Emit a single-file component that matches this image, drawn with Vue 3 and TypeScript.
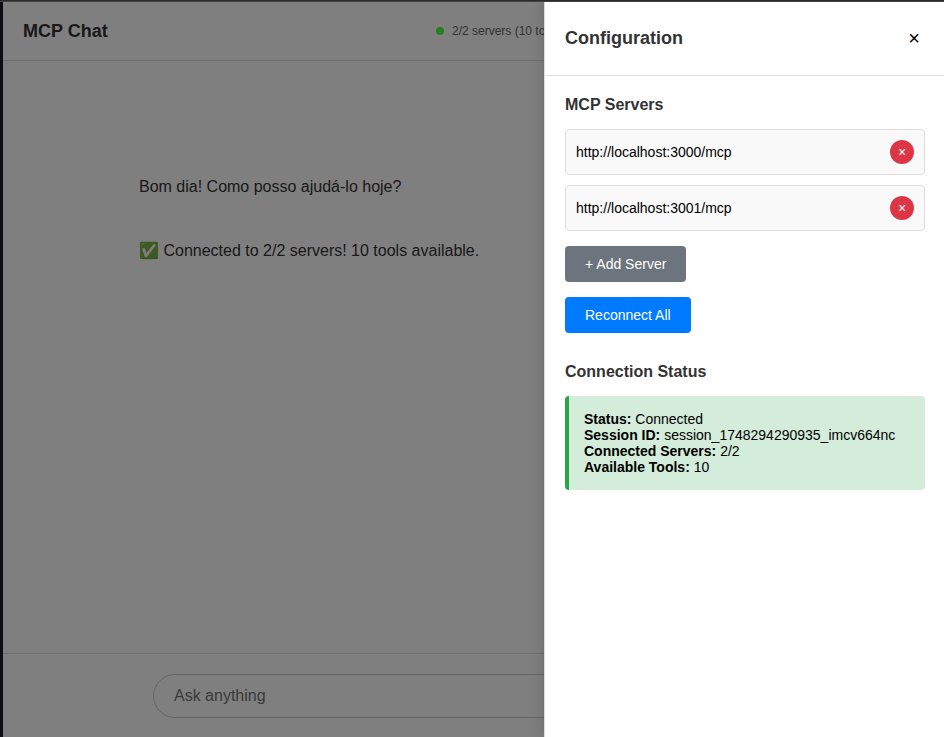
<script setup lang="ts">
import { ref } from 'vue'

interface Message {
  id: number
  text: string
}

interface StatusRow {
  label: string
  value: string
}

const messages: Message[] = [
  { id: 1, text: 'Bom dia! Como posso ajudá-lo hoje?' },
  { id: 2, text: '✅ Connected to 2/2 servers! 10 tools available.' },
]

const servers = ref<string[]>(['http://localhost:3000/mcp', 'http://localhost:3001/mcp'])

const statusRows: StatusRow[] = [
  { label: 'Status:', value: 'Connected' },
  { label: 'Session ID:', value: 'session_1748294290935_imcv664nc' },
  { label: 'Connected Servers:', value: '2/2' },
  { label: 'Available Tools:', value: '10' },
]

const draft = ref('')

function removeServer(index: number): void {
  servers.value.splice(index, 1)
}

function addServer(): void {
  servers.value.push('')
}
</script>

<template>
  <div class="window">
    <div class="app">
      <header class="app-header">
        <h1 class="app-title">MCP Chat</h1>
        <div class="server-status">
          <span class="status-dot"></span>
          <span>2/2 servers (10 tools)</span>
        </div>
      </header>
      <main class="messages">
        <p v-for="message in messages" :key="message.id" class="message">{{ message.text }}</p>
      </main>
      <footer class="composer">
        <input v-model="draft" class="composer-input" type="text" placeholder="Ask anything" />
      </footer>
    </div>
    <div class="overlay">
      <aside class="panel">
        <header class="panel-header">
          <h2 class="panel-title">Configuration</h2>
          <button class="close-button" type="button">×</button>
        </header>
        <div class="panel-body">
          <section class="section">
            <h3 class="section-title">MCP Servers</h3>
            <div v-for="(server, index) in servers" :key="index" class="server-item">
              <span class="server-url">{{ server }}</span>
              <button class="remove-button" type="button" @click="removeServer(index)">×</button>
            </div>
            <div class="actions">
              <button class="button secondary" type="button" @click="addServer">+ Add Server</button>
              <button class="button primary" type="button">Reconnect All</button>
            </div>
          </section>
          <section class="section">
            <h3 class="section-title">Connection Status</h3>
            <div class="status-card">
              <div v-for="row in statusRows" :key="row.label">
                <strong>{{ row.label }}</strong> {{ row.value }}
              </div>
            </div>
          </section>
        </div>
      </aside>
    </div>
  </div>
</template>

<style>
body {
  overflow: hidden;
}
</style>

<style scoped>
* {
  box-sizing: border-box;
  margin: 0;
}

.window {
  position: relative;
  height: 737px;
  width: 944px;
  overflow: hidden;
  padding: 2px 0 0 3px;
  background: #0c0d15;
  font-family: 'Liberation Sans', Arial, sans-serif;
  color: #333;
}

.window::before {
  content: '';
  position: absolute;
  top: 0;
  left: 0;
  width: 100%;
  height: 2px;
  background: linear-gradient(#2b2a2c 50%, #414042 50%);
}

.app {
  display: flex;
  flex-direction: column;
  height: 735px;
  background: #fff;
}

.app-header {
  display: flex;
  align-items: center;
  height: 59px;
  padding-left: 20px;
  border-bottom: 1px solid #ddd;
}

.app-title {
  width: 413px;
  font-size: 18px;
  line-height: 20px;
}

.server-status {
  display: flex;
  align-items: center;
  gap: 8px;
  font-size: 12px;
  color: #666;
  white-space: nowrap;
}

.status-dot {
  width: 8px;
  height: 8px;
  border-radius: 50%;
  background: #44ff44;
}

.messages {
  flex: 1;
  display: flex;
  flex-direction: column;
  gap: 40px;
  padding: 114px 136px 0;
}

.message {
  font-size: 16px;
  line-height: 24px;
}

.composer {
  height: 84px;
  padding: 20px 150px;
  border-top: 1px solid #ddd;
}

.composer-input {
  display: block;
  width: 100%;
  height: 44px;
  padding: 0 20px;
  border: 1px solid #ccc;
  border-radius: 22px;
  background: #fff;
  font: inherit;
  font-size: 16px;
}

.composer-input::placeholder {
  color: #757575;
  opacity: 1;
}

.overlay {
  position: absolute;
  top: 2px;
  left: 3px;
  right: -1px;
  bottom: 0;
  display: flex;
  justify-content: flex-end;
  overflow: hidden;
  background: rgba(0, 0, 0, 0.5);
}

.panel {
  width: 401px;
  border-left: 1px solid #ddd;
  background: #fff;
  box-shadow: -2px 0 10px rgba(0, 0, 0, 0.15);
}

.panel-header {
  display: flex;
  align-items: center;
  justify-content: space-between;
  height: 74px;
  padding: 0 20px 2px;
  border-bottom: 1px solid #ddd;
}

.panel-title {
  font-size: 18px;
  line-height: 20px;
}

.close-button {
  width: 22px;
  padding: 0;
  border: 0;
  background: none;
  color: #000;
  font: 20px/24px 'Liberation Sans', Arial, sans-serif;
}

.panel-body {
  padding: 19px 20px 0;
}

.section {
  margin-bottom: 29px;
}

.section-title {
  margin-bottom: 15px;
  font-size: 16px;
  line-height: 19px;
}

.server-item {
  display: flex;
  align-items: center;
  justify-content: space-between;
  height: 46px;
  margin-bottom: 10px;
  padding: 0 10px;
  border: 1px solid #ddd;
  border-radius: 4px;
  background: #f9f9f9;
}

.server-url {
  font-size: 14px;
  color: #000;
}

.remove-button {
  width: 24px;
  height: 24px;
  padding: 0;
  border: 0;
  border-radius: 50%;
  background: #dc3545;
  color: #fff;
  font: 14px 'Liberation Sans', Arial, sans-serif;
}

.actions {
  display: flex;
  flex-direction: column;
  align-items: flex-start;
  gap: 15px;
  padding-top: 5px;
}

.button {
  height: 36px;
  padding: 0 20px;
  border: 0;
  border-radius: 4px;
  color: #fff;
  font: 14px 'Liberation Sans', Arial, sans-serif;
}

.secondary {
  background: #6c757d;
}

.primary {
  background: #007bff;
}

.status-card {
  height: 94px;
  padding: 15px;
  border-left: 4px solid #28a745;
  border-radius: 4px;
  background: #d4edda;
  color: #000;
  font-size: 14px;
  line-height: 16px;
}
</style>
